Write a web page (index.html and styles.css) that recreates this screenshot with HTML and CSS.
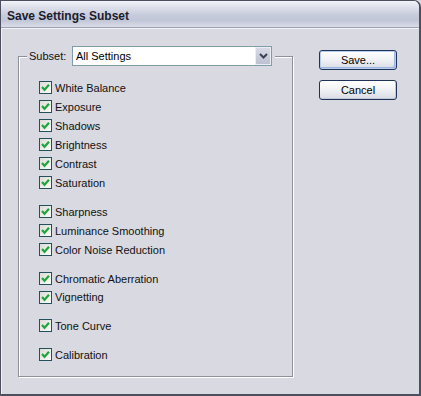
FILE: index.html
```html
<!DOCTYPE html>
<html>
<head>
<meta charset="utf-8">
<title>Save Settings Subset</title>
<link rel="stylesheet" href="styles.css">
</head>
<body>
<div class="window">
  <div class="titlebar">Save Settings Subset</div>
  <div class="panel">
    <div class="group">
      <div class="legend">
        <span class="label">Subset:</span>
        <div class="select">
          <span class="value">All Settings</span>
          <span class="arrow"><svg width="9" height="6" viewBox="0 0 9 6"><polyline points="1,1 4.5,4.5 8,1" fill="none" stroke="#3c4254" stroke-width="2"/></svg></span>
        </div>
      </div>
      <div class="checks">
        <div class="block">
          <div class="row"><span class="box"></span>White Balance</div>
          <div class="row"><span class="box"></span>Exposure</div>
          <div class="row"><span class="box"></span>Shadows</div>
          <div class="row"><span class="box"></span>Brightness</div>
          <div class="row"><span class="box"></span>Contrast</div>
          <div class="row"><span class="box"></span>Saturation</div>
        </div>
        <div class="block">
          <div class="row"><span class="box"></span>Sharpness</div>
          <div class="row"><span class="box"></span>Luminance Smoothing</div>
          <div class="row"><span class="box"></span>Color Noise Reduction</div>
        </div>
        <div class="block">
          <div class="row"><span class="box"></span>Chromatic Aberration</div>
          <div class="row short"><span class="box"></span>Vignetting</div>
        </div>
        <div class="block">
          <div class="row"><span class="box"></span>Tone Curve</div>
        </div>
        <div class="block">
          <div class="row"><span class="box"></span>Calibration</div>
        </div>
      </div>
    </div>
    <div class="buttons">
      <div class="button default">Save...</div>
      <div class="button">Cancel</div>
    </div>
  </div>
</div>
</body>
</html>
```
FILE: styles.css
```css
html, body
  {
	margin : 0;
	padding : 0;
	background-color : #d8d9e1;
  } /*body*/

.window
  {
	box-sizing : border-box;
	width : 421px;
	height : 396px;
	border-style : solid;
	border-color : #4c505e;
	border-width : 1px 2px 2px 1px;
	border-radius : 0 7px 0 0;
	background-color : #d8d9e1;
	display : flex;
	flex-direction : column;
	overflow : hidden;
	font-family : "Liberation Sans", Arial, sans-serif;
	font-size : 11px;
	color : #111;
  } /*.window*/

.titlebar
  {
	height : 26px;
	box-sizing : border-box;
	padding : 4px 0 0 6px;
	line-height : 22px;
	font-size : 12px;
	font-weight : bold;
	color : #1c1c2c;
	background : linear-gradient(#f3f4f8 0, #e2e5ee 18%, #c6cbdb 55%, #c2c7d8 75%, #dadde7 100%);
  } /*.titlebar*/

.panel
  {
	flex : 1;
	display : flex;
	align-items : flex-start;
	padding : 22px 0 0 17px;
	border-top : 1px solid #9ea2b2;
	box-shadow : inset 1px 1px 0 #f2f3f7;
  } /*.panel*/

.group
  {
	box-sizing : border-box;
	width : 275px;
	height : 321px;
	margin-top : 6px;
	border : 1px solid #8e909c;
	box-shadow : 1px 1px 0 #fff, inset 1px 1px 0 #fff;
  } /*.group*/

.legend
  {
	display : flex;
	align-items : center;
	gap : 6px;
	width : max-content;
	height : 20px;
	margin : -11px 0 0 8px;
	padding : 0 3px 0 2px;
	background-color : #d8d9e1;
  } /*.legend*/

.label
  {
	width : 37px;
  } /*.label*/

.select
  {
	box-sizing : border-box;
	width : 200px;
	height : 20px;
	display : flex;
	align-items : center;
	justify-content : space-between;
	border : 1px solid #7f9cac;
	background-color : #fff;
  } /*.select*/
.select .value
  {
	padding-left : 3px;
	color : #000;
  } /*.select .value*/
.select .arrow
  {
	box-sizing : border-box;
	width : 16px;
	height : 18px;
	display : flex;
	align-items : center;
	justify-content : center;
	border : 1px solid #eceef4;
	background : linear-gradient(#d8dbe6, #bcc0d0);
  } /*.select .arrow*/

.checks
  {
	padding : 12px 0 0 20px;
  } /*.checks*/
.block + .block
  {
	margin-top : 10px;
  } /*.block*/

.row
  {
	height : 19px;
	display : flex;
	align-items : center;
	gap : 3px;
	color : #111;
  } /*.row*/
.row.short
  {
	height : 18px;
  } /*.row.short*/

.box
  {
	box-sizing : border-box;
	width : 13px;
	height : 13px;
	border : 1px solid #24505c;
	background-color : #eef0ee;
	background-image : url("data:image/svg+xml,%3Csvg xmlns='http://www.w3.org/2000/svg' width='11' height='11'%3E%3Cpolyline points='2,5 4.5,7.8 9,2.8' fill='none' stroke='%2321a441' stroke-width='2.2'/%3E%3C/svg%3E"), linear-gradient(135deg, #dcdcd6, #fbfbf9);
	background-repeat : no-repeat;
  } /*.box*/

.buttons
  {
	display : flex;
	flex-direction : column;
	gap : 10px;
	margin-left : 26px;
  } /*.buttons*/

.button
  {
	box-sizing : border-box;
	width : 78px;
	height : 20px;
	line-height : 18px;
	text-align : center;
	color : #000;
	border : 1px solid #1f3359;
	border-radius : 3px;
	background : linear-gradient(#ffffff, #f2f3f6 45%, #d9dce6);
	box-shadow : inset -1px -1px 0 #c4c8d6;
  } /*.button*/
.button.default
  {
	box-shadow : inset 0 0 0 1px #b8cdee, inset -2px -2px 0 #9fb6e0;
  } /*.button.default*/
```
